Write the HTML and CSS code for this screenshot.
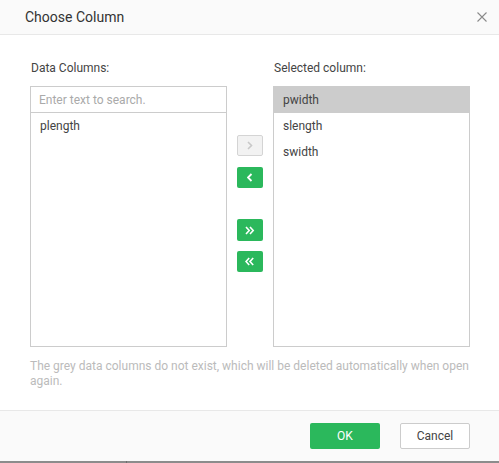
FILE: index.html
```html
<!DOCTYPE html>
<html>
<head>
<meta charset="utf-8">
<link rel="stylesheet" href="styles.css">
</head>
<body>
<div class="dialog">
  <div class="header">
    <span class="title">Choose Column</span>
    <svg class="close" width="10" height="10" viewBox="0 0 10 10"><path d="M0.5 0.5L9.5 9.5M9.5 0.5L0.5 9.5" stroke="#8a8a8a" stroke-width="1.1" fill="none"/></svg>
  </div>
  <div class="content">
    <div class="columns">
      <div class="col">
        <div class="label">Data Columns:</div>
        <div class="box">
          <input class="search" type="text" placeholder="Enter text to search.">
          <div class="row">plength</div>
        </div>
      </div>
      <div class="mid">
        <div class="btn disabled b1"><svg width="6" height="9" viewBox="0 0 6 9"><path d="M1 1L4.5 4.5L1 8" stroke="#c8c8c8" stroke-width="1.6" fill="none"/></svg></div>
        <div class="btn green b2"><svg width="6" height="9" viewBox="0 0 6 9"><path d="M4.5 1L1 4.5L4.5 8" stroke="#fff" stroke-width="1.8" fill="none"/></svg></div>
        <div class="btn green b3"><svg width="10" height="9" viewBox="0 0 10 9"><path d="M1 1L4.2 4.5L1 8M5 1L8.2 4.5L5 8" stroke="#fff" stroke-width="1.6" fill="none"/></svg></div>
        <div class="btn green b4"><svg width="10" height="9" viewBox="0 0 10 9"><path d="M4.2 1L1 4.5L4.2 8M8.2 1L5 4.5L8.2 8" stroke="#fff" stroke-width="1.6" fill="none"/></svg></div>
      </div>
      <div class="col">
        <div class="label">Selected column:</div>
        <div class="box">
          <div class="row selected">pwidth</div>
          <div class="row">slength</div>
          <div class="row">swidth</div>
        </div>
      </div>
    </div>
    <p class="note">The grey data columns do not exist, which will be deleted automatically when open again.</p>
  </div>
  <div class="footer">
    <button class="ok">OK</button>
    <button class="cancel">Cancel</button>
  </div>
  <div class="backdrop"><span class="seg"></span></div>
</div>
</body>
</html>
```
FILE: styles.css
```css
html, body {
  margin: 0;
  padding: 0;
  background: #fff;
}
body {
  font-family: Roboto, "Liberation Sans", Arial, sans-serif;
  font-size: 12px;
  color: #444;
}
.dialog {
  width: 499px;
  height: 463px;
  display: flex;
  flex-direction: column;
  overflow: hidden;
}
.header {
  height: 34px;
  background: #fafafa;
  border-bottom: 1px solid #e8e8e8;
  display: flex;
  align-items: center;
  justify-content: space-between;
  padding: 0 12px 0 25px;
  flex-shrink: 0;
}
.title {
  font-size: 14px;
  color: #333;
}
.content {
  flex: 1;
  padding: 25px 29px 0 30px;
}
.columns {
  display: flex;
}
.col {
  width: 197px;
  display: flex;
  flex-direction: column;
}
.label {
  height: 16px;
  line-height: 16px;
  margin-bottom: 10px;
  padding-left: 1px;
  color: #444;
}
.box {
  height: 259px;
  border: 1px solid #cccccc;
  background: #fff;
}
.search {
  display: block;
  width: 100%;
  box-sizing: border-box;
  height: 26px;
  border: none;
  border-bottom: 1px solid #cccccc;
  padding: 0 8px;
  font-family: inherit;
  font-size: 12px;
  outline: none;
  color: #444;
}
.search::placeholder {
  color: #aaa;
}
.row {
  height: 26px;
  line-height: 26px;
  padding-left: 9px;
  color: #444;
}
.selected {
  background: #cccccc;
}
.mid {
  width: 46px;
  display: flex;
  flex-direction: column;
  align-items: center;
  padding-top: 75px;
}
.btn {
  width: 26px;
  height: 21px;
  box-sizing: border-box;
  border-radius: 2px;
  display: flex;
  align-items: center;
  justify-content: center;
}
.disabled {
  background: #f2f2f2;
  border: 1px solid #d4d4d4;
}
.green {
  background: #2bb85c;
}
.b2 { margin-top: 11px; }
.b3 { margin-top: 31px; height: 22px; }
.b4 { margin-top: 10px; }
.note {
  margin: 12px 0 0 0;
  color: #bbbbbb;
  font-size: 12px;
  line-height: 15px;
}
.footer {
  height: 50px;
  flex-shrink: 0;
  background: #fafafa;
  border-top: 1px solid #e8e8e8;
  display: flex;
  align-items: center;
  justify-content: flex-end;
  padding-right: 29px;
  gap: 20px;
}
.footer button {
  width: 70px;
  height: 26px;
  border-radius: 2px;
  font-family: inherit;
  font-size: 12px;
  cursor: pointer;
}
.ok {
  background: #2bb85c;
  border: none;
  color: #fff;
  font-size: 13px;
}
.cancel {
  background: #fff;
  border: 1px solid #cccccc;
  color: #444;
}
.backdrop {
  height: 2px;
  background: #8c8c8c;
  flex-shrink: 0;
  display: flex;
}
.seg {
  width: 1px;
  margin-left: 126px;
  background: #6e6e6e;
}
```
